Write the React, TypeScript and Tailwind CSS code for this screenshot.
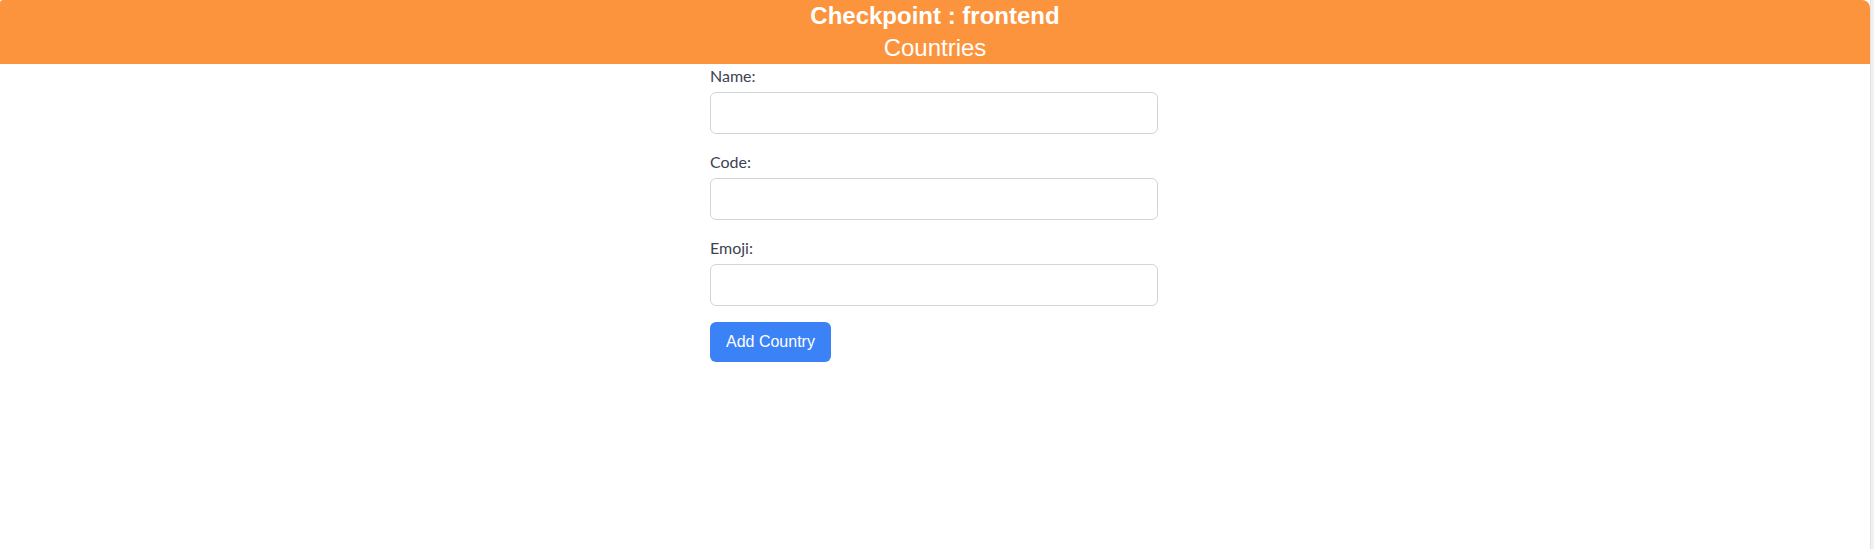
import { useState } from "react"

export default function App() {
  const [name, setName] = useState("")
  const [code, setCode] = useState("")
  const [emoji, setEmoji] = useState("")

  return (
    <div className="flex h-[549px] w-full bg-white font-['Lato','Liberation_Sans',sans-serif]">
      <div className="flex min-w-0 flex-1 flex-col">
        <header className="flex h-16 flex-col items-center rounded-tl-[3px] rounded-tr-lg bg-[#fb943d] font-['Liberation_Sans',sans-serif] text-2xl text-white">
          <h1 className="font-bold leading-8">Checkpoint : frontend</h1>
          <h2 className="font-normal leading-8">Countries</h2>
        </header>

        <div className="flex justify-center pr-0.5">
          <form className="flex w-md flex-col" onSubmit={(e) => e.preventDefault()}>
            <label className="mb-1 text-base leading-6 text-[#3b4453]">Name:</label>
            <input
              value={name}
              onChange={(e) => setName(e.target.value)}
              className="mb-4 h-[42px] rounded-md border border-[#d1d5db] px-3 outline-none"
            />

            <label className="mb-1 text-base leading-6 text-[#3b4453]">Code:</label>
            <input
              value={code}
              onChange={(e) => setCode(e.target.value)}
              className="mb-4 h-[42px] rounded-md border border-[#d1d5db] px-3 outline-none"
            />

            <label className="mb-1 text-base leading-6 text-[#3b4453]">Emoji:</label>
            <input
              value={emoji}
              onChange={(e) => setEmoji(e.target.value)}
              className="mb-4 h-[42px] rounded-md border border-[#d1d5db] px-3 outline-none"
            />

            <div>
              <button
                type="submit"
                className="h-10 rounded-md bg-[#3b82f6] px-4 font-['Liberation_Sans',sans-serif] text-base leading-6 text-white hover:bg-[#2563eb]"
              >
                Add Country
              </button>
            </div>
          </form>
        </div>
      </div>
      {/* window edge */}
      <div className="w-1 border-l border-[#e2e2e2] bg-[#f1f1f1]" />
    </div>
  )
}
